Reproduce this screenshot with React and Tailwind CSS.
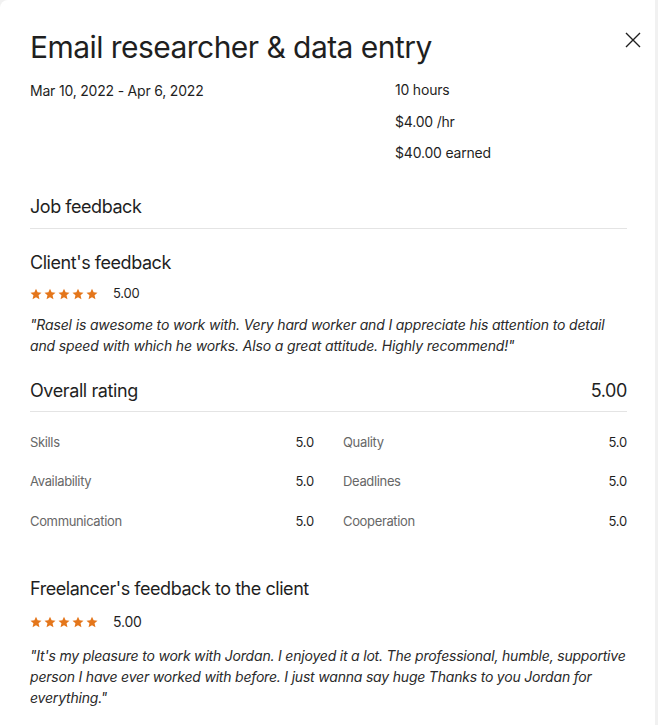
import React from 'react';

const font = { fontFamily: 'Inter, "Liberation Sans", sans-serif' };

function Stars() {
  return (
    <div className="flex items-center gap-[2px]">
      {[0, 1, 2, 3, 4].map((i) => (
        <svg key={i} width="12" height="12" viewBox="0 0 24 24" fill="#e4761b">
          <path d="M12 1.5l3.2 7.2 7.8.7-5.9 5.2 1.8 7.7L12 18.3l-6.9 4 1.8-7.7L1 9.4l7.8-.7z" />
        </svg>
      ))}
    </div>
  );
}

function Metric({ label, value }) {
  return (
    <div className="flex justify-between items-center h-[39.5px]">
      <span className="text-[13px] tracking-[-0.35px] text-[#676767]">{label}</span>
      <span className="text-[13px] tracking-[-0.2px] text-[#1f1f1f]">{value}</span>
    </div>
  );
}

export default function App() {
  return (
    <div className="w-[658px] h-[725px] bg-[#f1f1f1] overflow-hidden" style={font}>
      <div className="w-[655px] h-[725px] bg-white rounded-tl-lg pl-[30px] pr-[28px] pt-[29px] text-[#1f1f1f]">
        <div className="flex justify-between items-start">
          <h1 className="text-[30px] leading-[36px] tracking-[-0.55px]">Email researcher &amp; data entry</h1>
          <button className="mt-[1px] -mr-[16px]">
            <svg width="20" height="20" viewBox="0 0 20 20" stroke="#1f1f1f" strokeWidth="1.4" fill="none">
              <path d="M3 3l14 14M17 3L3 17" />
            </svg>
          </button>
        </div>

        <div className="flex mt-[15px] text-[14px] tracking-[-0.2px]">
          <div className="w-[365px]">Mar 10, 2022 - Apr 6, 2022</div>
          <div className="flex flex-col gap-[11.5px] leading-[20px]">
            <span>10 hours</span>
            <span>$4.00 /hr</span>
            <span>$40.00 earned</span>
          </div>
        </div>

        <div className="mt-[32px] pb-[9px] border-b border-[#e4e4e4] text-[18px] leading-[24px] tracking-[-0.45px]">Job feedback</div>

        <div className="mt-[22px] text-[18px] leading-[24px] tracking-[-0.45px]">Client's feedback</div>
        <div className="flex items-center gap-[15px] mt-[9px]">
          <Stars />
          <span className="text-[13px] tracking-[-0.2px]">5.00</span>
        </div>
        <p className="mt-[10px] text-[14px] italic leading-[21px] tracking-[-0.15px] text-[#2a2a2a]">
          "Rasel is awesome to work with. Very hard worker and I appreciate his attention to detail and speed with which he works. Also a great attitude. Highly recommend!"
        </p>

        <div className="mt-[23px] pb-[8px] border-b border-[#e4e4e4] flex justify-between items-center text-[18px] leading-[24px] tracking-[-0.4px]">
          <span>Overall rating</span>
          <span>5.00</span>
        </div>

        <div className="grid grid-cols-2 gap-x-[29px] mt-[11px]">
          <Metric label="Skills" value="5.0" />
          <Metric label="Quality" value="5.0" />
          <Metric label="Availability" value="5.0" />
          <Metric label="Deadlines" value="5.0" />
          <Metric label="Communication" value="5.0" />
          <Metric label="Cooperation" value="5.0" />
        </div>

        <div className="mt-[36px] text-[18px] leading-[24px] tracking-[-0.45px]">Freelancer's feedback to the client</div>
        <div className="flex items-center gap-[15px] mt-[10px]">
          <Stars />
          <span className="text-[14px] tracking-[-0.2px]">5.00</span>
        </div>
        <p className="mt-[13px] text-[14px] italic leading-[21px] tracking-[-0.2px] text-[#2a2a2a]">
          "It's my pleasure to work with Jordan. I enjoyed it a lot. The professional, humble, supportive person I have ever worked with before. I just wanna say huge Thanks to you Jordan for everything."
        </p>
      </div>
    </div>
  );
}
